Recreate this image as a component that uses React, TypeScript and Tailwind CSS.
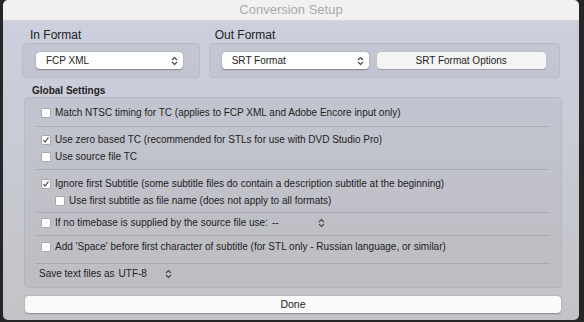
import React from "react";

function Arrows({ className = "" }: { className?: string }) {
  return (
    <svg width="7" height="10" viewBox="0 0 7 10" className={className}>
      <path d="M1 4 L3.5 1.5 L6 4" fill="none" stroke="#444" strokeWidth="1.1" />
      <path d="M1 6 L3.5 8.5 L6 6" fill="none" stroke="#444" strokeWidth="1.1" />
    </svg>
  );
}

function Popup({ label, className = "" }: { label: string; className?: string }) {
  return (
    <div
      className={
        "h-[17px] flex items-center justify-between pl-[10px] pr-[5px] bg-white rounded-[4px] shadow-[0_0.5px_1.5px_rgba(0,0,0,0.35)] text-[10px] text-[#222] " +
        className
      }
    >
      <span>{label}</span>
      <Arrows />
    </div>
  );
}

function Check({ checked = false }: { checked?: boolean }) {
  return (
    <div className="w-[10px] h-[10px] shrink-0 bg-white rounded-[2px] border border-[#a9a9ad] flex items-center justify-center">
      {checked && (
        <svg width="8" height="8" viewBox="0 0 8 8">
          <path d="M1.5 4.2 L3.1 6 L6.5 1.5" fill="none" stroke="#333" strokeWidth="1.1" />
        </svg>
      )}
    </div>
  );
}

function Row({
  checked,
  children,
  className = "",
}: {
  checked?: boolean;
  children: React.ReactNode;
  className?: string;
}) {
  return (
    <div className={"h-[17px] flex items-center gap-[4px] " + className}>
      <Check checked={checked} />
      <span className="whitespace-nowrap">{children}</span>
    </div>
  );
}

function Sep({ className = "" }: { className?: string }) {
  return <div className={"h-px mx-[11px] bg-black/[0.11] " + className} />;
}

export default function App() {
  return (
    <div
      className="w-[584px] h-[322px] bg-[#262626] pl-[3px] overflow-hidden"
      style={{ fontFamily: '"Liberation Sans", Arial, sans-serif' }}
    >
      <div className="w-[576px] h-[320px] rounded-[5px] overflow-hidden flex flex-col">
        <div className="h-[21px] shrink-0 bg-[#f1f1f1] border-b border-[#d6d6da] text-center text-[13px] leading-[20px] text-[#a9a9a9]">
          Conversion Setup
        </div>
        <div className="flex-1 bg-gradient-to-b from-[#ccd0de] to-[#c3c3c7] px-[19px] pt-[7px] text-[#222]">
          <div className="flex gap-[9px]">
            <div className="w-[178px]">
              <div className="text-[12px] leading-[14px] ml-[8px] mb-px">In Format</div>
              <div className="h-[35px] rounded-[4px] bg-black/[0.04] border border-black/[0.05] pl-[13px] pt-[8px]">
                <Popup label="FCP XML" className="w-[147px]" />
              </div>
            </div>
            <div className="w-[352px]">
              <div className="text-[12px] leading-[14px] ml-[6px] mb-px">Out Format</div>
              <div className="h-[35px] rounded-[4px] bg-black/[0.04] border border-black/[0.05] pl-[12px] pt-[8px] flex gap-[8px]">
                <Popup label="SRT Format" className="w-[147px]" />
                <div className="w-[169px] h-[17px] rounded-[4px] bg-[#f4f4f5] shadow-[0_0.5px_1px_rgba(0,0,0,0.2)] text-[10px] flex items-center justify-center">
                  SRT Format Options
                </div>
              </div>
            </div>
          </div>

          <div className="mt-[7px] ml-[10px] text-[10px] leading-[12px] font-bold">Global Settings</div>

          <div className="ml-[2px] w-[538px] h-[191px] rounded-[4px] bg-black/[0.035] border border-black/[0.05] pt-[6px] text-[10px]">
            <div className="pl-[16px]">
              <Row>Match NTSC timing for TC (applies to FCP XML and Adobe Encore input only)</Row>
            </div>
            <Sep className="mt-[5px]" />
            <div className="pl-[16px] mt-[4px]">
              <Row checked>Use zero based TC (recommended for STLs for use with DVD Studio Pro)</Row>
              <Row>Use source file TC</Row>
            </div>
            <Sep className="mt-[4px]" />
            <div className="pl-[16px] mt-[5px]">
              <Row checked>Ignore first Subtitle (some subtitle files do contain a description subtitle at the beginning)</Row>
              <Row className="pl-[14px]">Use first subtitle as file name (does not apply to all formats)</Row>
            </div>
            <Sep className="mt-[3px]" />
            <div className="pl-[16px] mt-[1px] flex items-center">
              <Row>If no timebase is supplied by the source file use:</Row>
              <span className="ml-[4px] w-[46px]">--</span>
              <Arrows />
            </div>
            <Sep className="mt-[4px]" />
            <div className="pl-[16px] mt-[2px]">
              <Row>Add 'Space' before first character of subtitle (for STL only - Russian language, or similar)</Row>
            </div>
            <Sep className="mt-[8px]" />
            <div className="pl-[14px] mt-px h-[17px] flex items-center">
              <span>Save text files as</span>
              <span className="ml-[4px] w-[46px]">UTF-8</span>
              <Arrows />
            </div>
          </div>

          <div className="mt-[8px] ml-[3px] w-[536px] h-[17px] rounded-[4px] bg-[#fafafa] shadow-[0_0.5px_1.5px_rgba(0,0,0,0.3)] text-[10.5px] flex items-center justify-center">
            Done
          </div>
        </div>
      </div>
    </div>
  );
}
